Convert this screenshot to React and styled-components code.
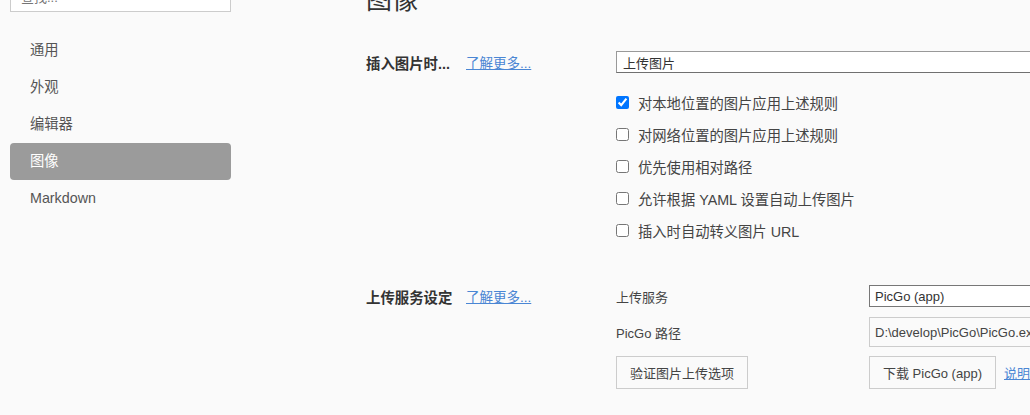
import styled, { createGlobalStyle } from "styled-components";

const GlobalStyle = createGlobalStyle`
  html, body {
    margin: 0;
    padding: 0;
    background: #fafafa;
  }
  body {
    font-family: "Liberation Sans", "Noto Sans CJK SC", sans-serif;
    color: #333;
  }
`;

const navItems = ["通用", "外观", "编辑器", "图像", "Markdown"];

const checks = [
  { label: "对本地位置的图片应用上述规则", checked: true },
  { label: "对网络位置的图片应用上述规则", checked: false },
  { label: "优先使用相对路径", checked: false },
  { label: "允许根据 YAML 设置自动上传图片", checked: false },
  { label: "插入时自动转义图片 URL", checked: false },
];

export default function App() {
  return (
    <>
      <GlobalStyle />
      <Window>
        <Sidebar>
          <Scrolled>
            <Search placeholder="查找..." />
            <Nav>
              {navItems.map((item) => (
                <NavItem key={item} active={item === "图像"}>
                  {item}
                </NavItem>
              ))}
            </Nav>
          </Scrolled>
        </Sidebar>
        <Main>
          <Heading>图像</Heading>

          <Section>
            <SectionTitle>
              <TitleText>插入图片时...</TitleText>
              <MoreLink href="#">了解更多...</MoreLink>
            </SectionTitle>
            <div>
              <TextBox value="上传图片" readOnly />
              <CheckList>
                {checks.map((c) => (
                  <CheckRow key={c.label}>
                    <input type="checkbox" defaultChecked={c.checked} />
                    {c.label}
                  </CheckRow>
                ))}
              </CheckList>
            </div>
          </Section>

          <Section second>
            <SectionTitle>
              <TitleText>上传服务设定</TitleText>
              <MoreLink href="#">了解更多...</MoreLink>
            </SectionTitle>
            <ServiceGrid>
              <FieldLabel>上传服务</FieldLabel>
              <Select value="PicGo (app)" readOnly />
              <FieldLabel>PicGo 路径</FieldLabel>
              <PathBox value="D:\develop\PicGo\PicGo.exe" readOnly />
              <ButtonCell>
                <Button>验证图片上传选项</Button>
              </ButtonCell>
              <ButtonCell>
                <Button>下载 PicGo (app)</Button>
                <HelpLink href="#">说明</HelpLink>
              </ButtonCell>
            </ServiceGrid>
          </Section>
        </Main>
      </Window>
    </>
  );
}

const Window = styled.div`
  display: flex;
  height: 415px;
  width: 1030px;
  overflow: hidden;
  background: #fafafa;
`;

const Sidebar = styled.div`
  width: 221px;
  flex-shrink: 0;
  padding: 0 10px;
`;

const Scrolled = styled.div`
  margin-top: -18px;
`;

const Search = styled.input`
  box-sizing: border-box;
  width: 100%;
  height: 30px;
  border: 1px solid #ccc;
  background: #fff;
  padding: 0 10px;
  font-family: inherit;
  font-size: 13px;
  outline: none;
`;

const Nav = styled.div`
  margin-top: 20px;
  display: flex;
  flex-direction: column;
`;

const NavItem = styled.div`
  height: 37px;
  line-height: 37px;
  padding-left: 20px;
  border-radius: 4px;
  font-size: 14.3px;
  color: ${(p) => (p.active ? "#fff" : "#555")};
  background: ${(p) => (p.active ? "#9b9b9b" : "transparent")};
`;

const Main = styled.div`
  flex: 1;
  padding-left: 125px;
  min-width: 0;
`;

const Heading = styled.h1`
  margin: -15px 0 0;
  font-size: 26px;
  line-height: 31px;
  font-weight: normal;
  color: #333;
`;

const Section = styled.div`
  display: grid;
  grid-template-columns: 250px 1fr;
  align-items: start;
  margin-top: ${(p) => (p.second ? "39px" : "35px")};
`;

const SectionTitle = styled.div`
  display: flex;
  align-items: center;
  height: 22px;
`;

const TitleText = styled.span`
  min-width: 100px;
  font-size: 14.4px;
  font-weight: bold;
  color: #333;
`;

const MoreLink = styled.a`
  font-size: 13.5px;
  color: #4a86d4;
  text-decoration: underline;
`;

const TextBox = styled.input`
  box-sizing: border-box;
  display: block;
  width: 440px;
  height: 22px;
  border: 1px solid #999;
  border-bottom-color: #707070;
  background: #fff;
  padding: 0 6px;
  font-family: inherit;
  font-size: 13px;
  color: #333;
  outline: none;
`;

const CheckList = styled.div`
  margin-top: 13px;
  display: flex;
  flex-direction: column;
`;

const CheckRow = styled.label`
  display: flex;
  align-items: center;
  height: 32px;
  font-size: 14.3px;
  color: #444;

  input {
    width: 13px;
    height: 13px;
    margin: 0 9px 0 0;
  }
`;

const ServiceGrid = styled.div`
  display: grid;
  grid-template-columns: 253px 200px;
  grid-template-rows: 22px 30px 33px;
  row-gap: 10px;
  align-items: center;

  & > :nth-child(n + 5) {
    margin-top: -2px;
  }
`;

const FieldLabel = styled.div`
  font-size: 13px;
  color: #444;
`;

const Select = styled.input`
  box-sizing: border-box;
  width: 100%;
  height: 22px;
  border: 1px solid #777;
  background: #fff;
  padding: 0 5px;
  font-family: inherit;
  font-size: 13px;
  color: #333;
  outline: none;
`;

const PathBox = styled.input`
  box-sizing: border-box;
  width: 100%;
  height: 30px;
  border: 1px solid #ccc;
  background: #fafafa;
  padding: 0 5px;
  font-family: inherit;
  font-size: 13px;
  color: #444;
  outline: none;
`;

const ButtonCell = styled.div`
  display: flex;
  align-items: center;
  white-space: nowrap;
`;

const Button = styled.button`
  height: 33px;
  padding: 0 13px;
  border: 1px solid #ccc;
  border-radius: 0;
  background: #fafafa;
  font-family: inherit;
  font-size: 13px;
  color: #444;
`;

const HelpLink = styled.a`
  margin-left: 8px;
  font-size: 13px;
  color: #4a86d4;
  text-decoration: underline;
`;
